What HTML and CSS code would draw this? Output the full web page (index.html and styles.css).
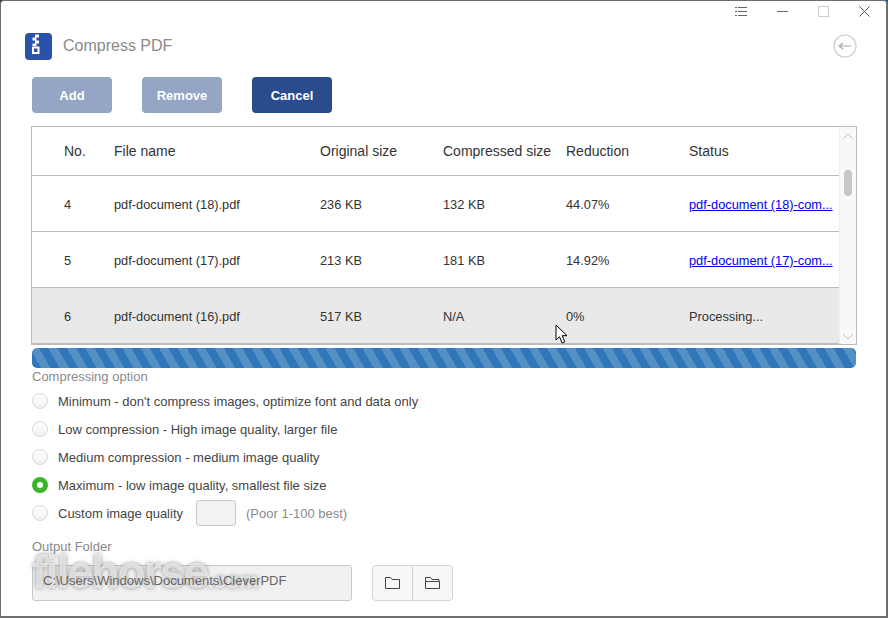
FILE: index.html
```html
<!DOCTYPE html>
<html lang="en">
  <head>
    <title>Compress PDF</title>
    <meta charset="UTF-8" />
    <link rel="stylesheet" href="styles.css">
  </head>

  <body>
    <div class="window">
      <div class="titlebar">
        <svg class="win-icon" width="12" height="11" viewBox="0 0 12 11">
          <path d="M0 1.500h2M0 5.500h2M0 9.500h2M3 1.500h9M3 5.500h9M3 9.500h9" stroke="#666" fill="none" />
        </svg>
        <span class="win-min"></span>
        <span class="win-max"></span>
        <svg class="win-icon" width="11" height="11" viewBox="0 0 11 11">
          <path d="M.5.5l10 10M10.500.5l-10 10" stroke="#555" fill="none" />
        </svg>
      </div>

      <header class="app-header">
        <div class="app-title">
          <svg class="logo" width="27" height="27" viewBox="0 0 27 27">
            <rect width="27" height="27" rx="4" fill="#2a52a8" />
            <path d="M10 1.500h4v3h-4zM7.500 4.500h4v3h-4zM10 7.500h4v3h-4zM7.500 10.500h4v2.500h-4z" fill="#fff" />
            <path d="M8 14.500h5.500v5.500H8z" fill="none" stroke="#fff" stroke-width="2" />
          </svg>
          <span class="app-name">Compress PDF</span>
        </div>
        <svg class="back" width="24" height="24" viewBox="0 0 24 24">
          <circle cx="12" cy="12" r="11" fill="none" stroke="#ccc" stroke-width="1.200" />
          <path d="M6 12h12M6 12l4-3M6 12l4 3" fill="none" stroke="#aaa" stroke-width="1.200" />
        </svg>
      </header>

      <div class="toolbar">
        <button class="btn disabled">Add</button>
        <button class="btn disabled">Remove</button>
        <button class="btn">Cancel</button>
      </div>

      <div class="table-box">
        <div class="table-scroll">
          <div class="row head">
            <span>No.</span><span>File name</span><span>Original size</span><span>Compressed size</span><span>Reduction</span><span>Status</span>
          </div>
          <div class="row">
            <span>4</span><span>pdf-document (18).pdf</span><span>236 KB</span><span>132 KB</span><span>44.07%</span><a href="#">pdf-document (18)-com...</a>
          </div>
          <div class="row">
            <span>5</span><span>pdf-document (17).pdf</span><span>213 KB</span><span>181 KB</span><span>14.92%</span><a href="#">pdf-document (17)-com...</a>
          </div>
          <div class="row active">
            <span>6</span><span>pdf-document (16).pdf</span><span>517 KB</span><span>N/A</span><span>0%</span><span>Processing...</span>
          </div>
        </div>
        <div class="scrollbar">
          <svg width="12" height="7" viewBox="0 0 12 7"><path d="M1 6l5-5 5 5" fill="none" stroke="#c4c4c4" /></svg>
          <span class="thumb"></span>
          <svg class="down" width="12" height="7" viewBox="0 0 12 7"><path d="M1 1l5 5 5-5" fill="none" stroke="#c4c4c4" /></svg>
        </div>
      </div>

      <div class="progress"></div>

      <div class="label">Compressing option</div>
      <div class="options">
        <div class="option"><span class="radio"></span>Minimum - don't compress images, optimize font and data only</div>
        <div class="option"><span class="radio"></span>Low compression - High image quality, larger file</div>
        <div class="option"><span class="radio"></span>Medium compression - medium image quality</div>
        <div class="option"><span class="radio on"></span>Maximum - low image quality, smallest file size</div>
        <div class="option">
          <span class="radio"></span>Custom image quality
          <span class="quality"></span>
          <span class="hint">(Poor 1-100 best)</span>
        </div>
      </div>

      <div class="label output-label">Output Folder</div>
      <div class="output">
        <div class="path"><span class="path-text">C:\Users\Windows\Documents\CleverPDF</span></div>
        <div class="folder-btns">
          <span class="folder-btn">
            <svg width="15" height="12" viewBox="0 0 15 12"><path d="M.5 11.500V.5h5l1.500 2h7.500v9z" fill="none" stroke="#444" /></svg>
          </span>
          <span class="folder-btn">
            <svg width="15" height="12" viewBox="0 0 15 12"><path d="M.5 11.500V.5h5l1.500 2h7v2M.5 11.500h14v-7H.5" fill="none" stroke="#444" /></svg>
          </span>
        </div>
      </div>

      <div class="watermark">filehorse<small>.com</small></div>

      <svg class="cursor" width="14" height="21" viewBox="0 0 14 21">
        <path d="M1 1v15l3.500-3.300 2.600 6.300 2.700-1.100-2.600-6.200h4.800z" fill="#fff" stroke="#000" />
      </svg>
    </div>
  </body>
</html>
```

FILE: styles.css
```css
body {
  margin: 0;
  background: linear-gradient(to right, #333 50%, #0d5ca8 50%);
  font-family: "Liberation Sans", Arial, sans-serif;
}

.window {
  position: relative;
  box-sizing: border-box;
  width: 888px;
  height: 618px;
  padding: 0 31px;
  background: #fff;
  border: 1px solid #6e6e6e;
  border-width: 1px 2px 2px 1px;
  border-radius: 4px 4px 0 0;
  overflow: hidden;
}

.titlebar {
  display: flex;
  align-items: center;
  justify-content: flex-end;
  gap: 30px;
  height: 20px;
  margin-right: -15px;
}

.win-min {
  width: 11px;
  height: 1px;
  background: #666;
}

.win-max {
  width: 9px;
  height: 9px;
  border: 1px solid #ccc;
}

.app-header {
  display: flex;
  align-items: center;
  justify-content: space-between;
  height: 28px;
  margin: 11px -2px 0 -7px;
}

.app-title {
  display: flex;
  align-items: center;
  gap: 11px;
}

.logo {
  margin-top: 1px;
}

.app-name {
  font-size: 16px;
  color: #8a8a8a;
}

.toolbar {
  display: flex;
  gap: 30px;
  margin-top: 17px;
}

.btn {
  width: 80px;
  height: 36px;
  border: 0;
  border-radius: 4px;
  background: #2a4b8d;
  color: #fff;
  font: bold 13px "Liberation Sans", Arial, sans-serif;
}

.btn.disabled {
  background: #94a5c6;
}

.table-box {
  display: flex;
  width: 826px;
  height: 219px;
  box-sizing: border-box;
  margin: 13px 0 0 -1px;
  border: 1px solid #bcbcbc;
}

.table-scroll {
  flex: 1;
}

.row {
  display: grid;
  grid-template-columns: 82px 206px 123px 123px 123px 1fr;
  align-items: center;
  height: 56px;
  box-sizing: border-box;
  padding-top: 2px;
  border-bottom: 1px solid #bcbcbc;
  font-size: 12.800px;
  color: #333;
}

.row.head {
  height: 49px;
  padding-top: 0;
  font-size: 14px;
}

.row > :first-child {
  padding-left: 32px;
}

.row.active {
  background: #e9e9e9;
}

.row a {
  color: #0000ee;
  white-space: nowrap;
}

.scrollbar {
  display: flex;
  flex-direction: column;
  align-items: center;
  width: 16px;
  padding-top: 6px;
  background: #f8f8f8;
  border-left: 1px solid #eee;
}

.thumb {
  width: 8px;
  height: 26px;
  margin-top: 30px;
  border-radius: 4px;
  background: #c6c6c6;
}

.scrollbar .down {
  margin-top: auto;
  margin-bottom: 4px;
}

.progress {
  width: 824px;
  height: 20px;
  margin-top: 3px;
  border-radius: 5px;
  background: repeating-linear-gradient(
    60deg,
    #2f77b8 0,
    #2f77b8 8px,
    #5590c4 8px,
    #5590c4 16px
  );
}

.label {
  margin-top: 1px;
  padding-top: 1px;
  font-size: 13px;
  line-height: 14px;
  color: #8a8a8a;
}

.options {
  display: flex;
  flex-direction: column;
  gap: 8px;
  margin-top: 7px;
}

.option {
  display: flex;
  align-items: center;
  height: 20px;
  font-size: 13px;
  color: #444;
}

.radio {
  box-sizing: border-box;
  width: 16px;
  height: 16px;
  margin-right: 10px;
  border: 1px solid #d8d8d8;
  border-radius: 50%;
  background: linear-gradient(#fff, #f0f0f4);
}

.radio.on {
  border: 5px solid #3cb52d;
  background: #fff;
}

.quality {
  box-sizing: border-box;
  width: 40px;
  height: 26px;
  margin: 0 10px 0 13px;
  border: 1px solid #c8c8c8;
  border-radius: 3px;
  background: #f3f3f3;
}

.hint {
  color: #8a8a8a;
}

.output-label {
  margin-top: 16px;
}

.output {
  display: flex;
  gap: 20px;
  margin-top: 11px;
}

.path {
  box-sizing: border-box;
  width: 320px;
  height: 36px;
  padding: 7px 10px;
  border: 1px solid #c8c8c8;
  border-radius: 3px;
  background: #f1f1f1;
  font-size: 13px;
  color: #666;
}

.path-text {
  position: relative;
  z-index: 1;
}

.folder-btns {
  display: flex;
  height: 36px;
  box-sizing: border-box;
  border: 1px solid #d4d4d4;
  border-radius: 4px;
  background: #f6f7f9;
}

.folder-btn {
  display: flex;
  align-items: center;
  justify-content: center;
  width: 39px;
}

.folder-btn + .folder-btn {
  border-left: 1px solid #d4d4d4;
}

/* site watermark over the window */
.watermark {
  position: absolute;
  left: 31px;
  top: 544px;
  font: bold 46px "Liberation Sans", sans-serif;
  letter-spacing: -1.800px;
  color: rgba(240, 240, 240, 0.75);
  text-shadow: 0 0 4px rgba(110, 110, 110, 0.75);
  pointer-events: none;
}

.watermark small {
  font-size: 22px;
  letter-spacing: 0;
}

.cursor {
  position: absolute;
  left: 554px;
  top: 323px;
}
```
